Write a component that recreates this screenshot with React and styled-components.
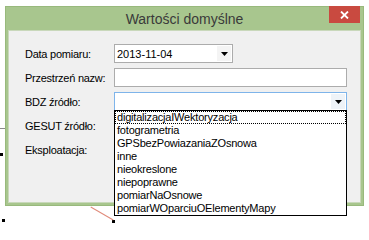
import styled, { createGlobalStyle } from 'styled-components'

const GlobalStyle = createGlobalStyle`
  html, body {
    margin: 0;
    padding: 0;
    background: #ffffff;
  }
  body {
    font-family: "Liberation Sans", Arial, sans-serif;
  }
`

const sources = [
  'digitalizacjaIWektoryzacja',
  'fotogrametria',
  'GPSbezPowiazaniaZOsnowa',
  'inne',
  'nieokreslone',
  'niepoprawne',
  'pomiarNaOsnowe',
  'pomiarWOparciuOElementyMapy',
]

const rows = [
  { label: 'Data pomiaru:', kind: 'date', value: '2013-11-04' },
  { label: 'Przestrzeń nazw:', kind: 'text' },
  { label: 'BDZ źródło:', kind: 'combo', open: true },
  { label: 'GESUT źródło:', kind: 'combo' },
  { label: 'Eksploatacja:', kind: 'combo' },
]

const Arrow = () => (
  <svg width="7" height="4" viewBox="0 0 7 4">
    <path d="M0 0 H7 L3.5 4 Z" fill="#000" />
  </svg>
)

const CloseGlyph = () => (
  <svg width="9" height="8" viewBox="0 0 9 8">
    <path d="M1 0.5 L8 7.5 M8 0.5 L1 7.5" stroke="#fff" strokeWidth="1.8" />
  </svg>
)

export default function App() {
  return (
    <Canvas>
      <GlobalStyle />
      <Backdrop />
      <Connector />
      <Window>
        <TitleBar>
          <span />
          <Title>Wartości domyślne</Title>
          <CloseButton>
            <CloseGlyph />
          </CloseButton>
        </TitleBar>
        <Client>
          <Form>
            {rows.map((row) => (
              <Row key={row.label}>
                <Label>{row.label}</Label>
                {row.kind === 'text' && <TextBox />}
                {row.kind === 'date' && (
                  <Combo narrow>
                    <Value>{row.value}</Value>
                    <ArrowButton>
                      <Arrow />
                    </ArrowButton>
                  </Combo>
                )}
                {row.kind === 'combo' && (
                  <Combo focused={row.open}>
                    <Value />
                    <ArrowButton focused={row.open}>
                      <Arrow />
                    </ArrowButton>
                    {row.open && (
                      <ListBox>
                        {sources.map((s, i) => (
                          <Item key={s} current={i === 0}>
                            {s}
                          </Item>
                        ))}
                      </ListBox>
                    )}
                  </Combo>
                )}
              </Row>
            ))}
          </Form>
        </Client>
      </Window>
    </Canvas>
  )
}

const Canvas = styled.div`
  position: relative;
  width: 369px;
  height: 227px;
  overflow: hidden;
  padding: 6px 0 0 5px;
  box-sizing: border-box;
`

// bits of the diagram lying behind the dialog
const Backdrop = styled.div`
  position: absolute;
  inset: 0;

  &::before {
    content: '';
    position: absolute;
    left: 0;
    top: 153px;
    width: 3px;
    height: 3px;
    background: #000;
    box-shadow: 2px 66px 0 #000, 112px 67px 0 #000;
  }

  &::after {
    content: '';
    position: absolute;
    left: 89px;
    top: 213px;
    width: 26px;
    height: 1px;
    background: #e08a7a;
    transform: rotate(30deg);
  }
`

const Connector = styled.div`
  position: absolute;
  left: 0;
  top: 128px;
  width: 5px;
  height: 1px;
  background: #8a8a8a;
`

const Window = styled.div`
  position: relative;
  width: 359px;
  height: 200px;
  box-sizing: border-box;
  display: flex;
  flex-direction: column;
  background: #a8c68e;
  border: 1px solid #98b97c;
  padding: 0 2px 2px;
`

const TitleBar = styled.div`
  display: grid;
  grid-template-columns: 1fr auto 1fr;
  align-items: start;
  height: 24px;
  margin: -1px -2px 0;
`

const Title = styled.div`
  font-size: 14px;
  line-height: 26px;
  color: #3a3a3a;
  white-space: nowrap;
`

const CloseButton = styled.div`
  justify-self: end;
  margin-right: 3px;
  width: 31px;
  height: 17px;
  background: #c94a40;
  display: flex;
  align-items: center;
  justify-content: center;
`

const Client = styled.div`
  flex: 1;
  background: #f0f0f0;
  border: 1px solid #c9d8bb;
  padding: 13px 0 0 16px;
`

const Form = styled.div`
  display: flex;
  flex-direction: column;
  gap: 5px;
`

const Row = styled.div`
  display: grid;
  grid-template-columns: 89px 233px;
  align-items: center;
  height: 19px;
`

const Label = styled.div`
  font-size: 11px;
  letter-spacing: -0.25px;
  color: #000;
  white-space: nowrap;
`

const TextBox = styled.div`
  height: 19px;
  box-sizing: border-box;
  background: #fff;
  border: 1px solid #acacac;
`

const Combo = styled.div`
  position: relative;
  width: ${(p) => (p.narrow ? '119px' : '233px')};
  height: 19px;
  box-sizing: border-box;
  background: #fff;
  border: 1px solid ${(p) => (p.focused ? '#7eb4ea' : '#acacac')};
  display: flex;
  align-items: center;
`

const Value = styled.div`
  flex: 1;
  padding-left: 2px;
  font-size: 11px;
  color: #000;
`

const ArrowButton = styled.div`
  width: 14px;
  height: 15px;
  margin-right: 1px;
  display: flex;
  align-items: center;
  justify-content: center;
  background: ${(p) => (p.focused ? '#eef3f8' : '#f4f4f4')};
`

const ListBox = styled.div`
  position: absolute;
  z-index: 2;
  top: 100%;
  left: -1px;
  right: -1px;
  background: #fff;
  border: 1px solid #000;
`

const Item = styled.div`
  font-size: 11px;
  line-height: 13px;
  height: 13px;
  padding-left: 2px;
  color: #000;
  white-space: nowrap;
  letter-spacing: -0.2px;
  outline: ${(p) => (p.current ? '1px dotted #000' : 'none')};
  outline-offset: -1px;
`
